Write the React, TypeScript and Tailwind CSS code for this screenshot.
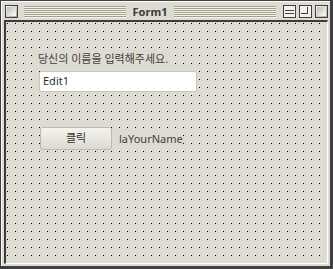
export default function App() {
    const stripes =
        "h-[12px] flex-1 bg-[repeating-linear-gradient(to_bottom,#a3a08a_0px,#a3a08a_1px,#f4f3ee_1px,#f4f3ee_2px)]"

    return (
        <div className="w-[333px] h-[269px] bg-[#404040] pl-px pt-px pr-[3px] pb-[3px] font-['Noto_Sans','Noto_Sans_CJK_KR',sans-serif]">
            <div className="w-full h-full flex flex-col bg-[#dedcd2] border-t border-l border-white pl-[2px] pr-[2px] pb-[2px]">
                {/* Titelleiste */}
                <div className="h-[18px] flex items-center gap-[6px] pt-px">
                    <div className="ml-px w-[13px] h-[13px] border border-[#404040] bg-[linear-gradient(135deg,#ffffff,#a8a698)] p-px">
                        <div className="w-full h-full bg-[linear-gradient(135deg,#bdbbae,#ffffff)]" />
                    </div>
                    <div className={stripes} />
                    <span className="text-[11px] leading-[14px] font-bold text-[#3a3a3a] px-[1px]">Form1</span>
                    <div className={stripes} />
                    <div className="flex gap-[3px] ml-[1px]">
                        <div className="w-[13px] h-[13px] border border-[#404040] bg-[#f2f1ec] flex flex-col justify-center px-[1px] gap-[2px]">
                            <div className="h-px bg-[#404040]" />
                            <div className="h-px bg-[#404040]" />
                        </div>
                        <div className="w-[13px] h-[13px] border border-[#404040] bg-[#f2f1ec] relative">
                            <div className="absolute left-[1px] top-[1px] w-[7px] h-[7px] border-r border-b border-[#404040]" />
                        </div>
                        <div className="w-[13px] h-[13px] border border-[#404040] bg-[linear-gradient(135deg,#ffffff,#a8a698)] p-px">
                            <div className="w-full h-full bg-[linear-gradient(135deg,#bdbbae,#ffffff)]" />
                        </div>
                    </div>
                </div>

                {/* Formular */}
                <div className="flex-1 border-t-2 border-l-2 border-[#3c3c3c] border-r border-b border-r-white border-b-white bg-[#dedcd2] bg-[linear-gradient(90deg,#dedcd2_7px,transparent_7px),linear-gradient(#dedcd2_7px,#000_7px)] bg-size-[8px_8px] bg-position-[-6px_-6px] pl-[32px] pt-[29px]">
                    <div className="w-fit bg-[#dedcd2] text-[11px] leading-[16px] text-[#404040]">당신의 이름을 입력해주세요.</div>
                    <div className="mt-[4px] ml-px w-[158px] h-[21px] bg-white border border-[#c9c7bd] rounded-[2px] flex items-center px-[3px] text-[11px] text-[#303030]">
                        Edit1
                    </div>
                    <div className="mt-[35px] ml-[2px] flex items-center gap-[7px]">
                        <div className="w-[72px] h-[23px] rounded-[3px] border border-[#bcbaae] bg-[linear-gradient(#f4f3ef,#dcdad0)] flex items-center justify-center text-[11px] text-[#303030]">
                            클릭
                        </div>
                        <span className="bg-[#dedcd2] text-[11px] leading-[16px] text-[#404040]">laYourName</span>
                    </div>
                </div>
            </div>
        </div>
    )
}
